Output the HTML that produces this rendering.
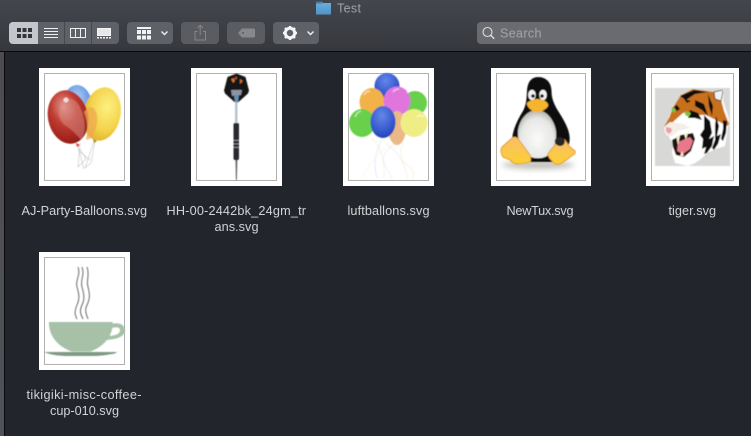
<!DOCTYPE html>
<html><head><meta charset="utf-8"><title>Test</title>
<style>
html,body{margin:0;padding:0;background:#22252c;width:751px;height:436px;overflow:hidden}
svg{display:block}
text{font-family:"Liberation Sans",sans-serif}
.l{font-size:12.700px;fill:#d2d3d6}
</style></head><body>
<svg width="751" height="436" viewBox="0 0 751 436" xmlns="http://www.w3.org/2000/svg">
<defs>
<linearGradient id="tb" x1="0" y1="0" x2="0" y2="1"><stop offset="0" stop-color="#44464e"/><stop offset="1" stop-color="#36383e"/></linearGradient>
<linearGradient id="fold" x1="0" y1="0" x2="0" y2="1"><stop offset="0" stop-color="#6db0de"/><stop offset="1" stop-color="#4f94c6"/></linearGradient>
<linearGradient id="side" x1="0" y1="0" x2="0" y2="1"><stop offset="0" stop-color="#4e4c4e"/><stop offset="1" stop-color="#50525a"/></linearGradient>
<radialGradient id="red" cx=".45" cy=".3" r=".8"><stop offset="0" stop-color="#e29a92"/><stop offset=".4" stop-color="#c03c32"/><stop offset="1" stop-color="#8a1410"/></radialGradient>
<radialGradient id="yel" cx=".6" cy=".35" r=".75"><stop offset="0" stop-color="#fdf080"/><stop offset=".6" stop-color="#f4d24a"/><stop offset="1" stop-color="#d8a826"/></radialGradient>
<radialGradient id="blu" cx=".5" cy=".3" r=".8"><stop offset="0" stop-color="#b8d4f6"/><stop offset=".55" stop-color="#5a90e2"/><stop offset="1" stop-color="#1e48a8"/></radialGradient>
<radialGradient id="bl2" cx=".45" cy=".3" r=".8"><stop offset="0" stop-color="#6387ea"/><stop offset=".7" stop-color="#2f52c8"/><stop offset="1" stop-color="#1f3a98"/></radialGradient>
<radialGradient id="bel" cx=".5" cy=".6" r=".62"><stop offset="0" stop-color="#fbfbfb"/><stop offset=".7" stop-color="#e6e6e4"/><stop offset="1" stop-color="#aaaaa6"/></radialGradient>
<linearGradient id="foot" x1="0" y1="0" x2="0" y2="1"><stop offset="0" stop-color="#f8bf6a"/><stop offset="1" stop-color="#fdcf34"/></linearGradient>
<filter id="b" x="-5%" y="-5%" width="110%" height="110%"><feGaussianBlur stdDeviation=".4"/></filter>
<filter id="sh" x="-30%" y="-60%" width="160%" height="220%"><feGaussianBlur stdDeviation="3"/></filter>
</defs>

<!-- toolbar -->
<rect width="751" height="51" fill="url(#tb)"/>
<rect y="51" width="751" height="1" fill="#08090b"/>
<rect x="0" y="52" width="4" height="384" fill="url(#side)"/>
<rect x="4" y="52" width="1" height="384" fill="#0a0b0d"/>

<!-- title -->
<path d="M316 3q0-1.500 1.500-1.500h4l1.500 1.500h8v11.500h-15z" fill="url(#fold)"/>
<path d="M316 1.500h5l1.500 2h-6.500z" fill="#3d78a6"/>
<text x="337" y="12.500" font-size="12.500" fill="#a0a2a6" textLength="24">Test</text>

<!-- view segmented -->
<rect x="9" y="22" width="110" height="22" rx="4" fill="#5f6168"/>
<path d="M13 22h25v22h-25a4 4 0 0 1-4-4v-14a4 4 0 0 1 4-4z" fill="#c3c6cb"/>
<rect x="64" y="22" width="1" height="22" fill="#46484e"/><rect x="91" y="22" width="1" height="22" fill="#46484e"/>
<g fill="#33353b"><rect x="17" y="28" width="4" height="4"/><rect x="22.500" y="28" width="4" height="4"/><rect x="28" y="28" width="4" height="4"/><rect x="17" y="34" width="4" height="4"/><rect x="22.500" y="34" width="4" height="4"/><rect x="28" y="34" width="4" height="4"/></g>
<g fill="#f0f0f1"><rect x="44" y="28" width="14" height="1"/><rect x="44" y="31" width="14" height="1"/><rect x="44" y="34" width="14" height="1"/><rect x="44" y="37" width="14" height="1"/></g>
<g fill="none" stroke="#f0f0f1"><rect x="70.500" y="28.500" width="15" height="9"/><path d="M75.500 28.500v9M80.500 28.500v9"/></g>
<rect x="97.500" y="28.500" width="13" height="7" fill="#e8e8ea" stroke="#f4f4f5"/>
<g fill="#f0f0f1"><rect x="97" y="37" width="2" height="1.500"/><rect x="100" y="37" width="2" height="1.500"/><rect x="103" y="37" width="2" height="1.500"/><rect x="106" y="37" width="2" height="1.500"/><rect x="109" y="37" width="2" height="1.500"/></g>

<!-- arrange -->
<rect x="127" y="22" width="46" height="22" rx="4" fill="#5f6168"/>
<g fill="#f2f2f3"><rect x="137" y="27" width="14" height="2"/><rect x="137" y="30" width="4" height="4"/><rect x="142" y="30" width="4" height="4"/><rect x="147" y="30" width="4" height="4"/><rect x="137" y="35.500" width="4" height="4"/><rect x="142" y="35.500" width="4" height="4"/><rect x="147" y="35.500" width="4" height="4"/></g>
<path d="M161.500 31.500l3 3 3-3" fill="none" stroke="#f0f0f1" stroke-width="1.400"/>

<!-- share -->
<rect x="181" y="22" width="38" height="22" rx="4" fill="#5a5c62"/>
<path d="M197.500 31.500h-2.500v8.500h10.500v-8.500h-2.500M200.200 35v-9M197.500 28l2.700-2.700 2.700 2.700" fill="none" stroke="#84868b" stroke-width="1"/>

<!-- tag -->
<rect x="227" y="22" width="38" height="22" rx="4" fill="#5a5c62"/>
<path d="M238 33l4-4.500h11.500a1.500 1.500 0 0 1 1.500 1.500v6a1.500 1.500 0 0 1-1.500 1.500h-11.500z" fill="#86888d"/>
<circle cx="243" cy="33" r="1" fill="#5a5c62"/>

<!-- action -->
<rect x="273" y="22" width="46" height="22" rx="4" fill="#5f6168"/>
<circle cx="290" cy="33" r="4.700" fill="none" stroke="#f5f5f6" stroke-width="3"/>
<g stroke="#f5f5f6" stroke-width="2.400"><path d="M290 26v2.500M290 37.500v2.500M283 33h2.500M294.500 33h2.500M285 28l1.800 1.800M293.200 36.200l1.800 1.800M295 28l-1.800 1.800M286.800 36.200l-1.800 1.800"/></g>
<path d="M307.500 31.500l3 3 3-3" fill="none" stroke="#f0f0f1" stroke-width="1.400"/>

<!-- search -->
<path d="M481 22h270v22h-270a4 4 0 0 1-4-4v-14a4 4 0 0 1 4-4z" fill="#696b70"/>
<circle cx="487.500" cy="32" r="4.500" fill="none" stroke="#dcdcde" stroke-width="1.100"/>
<path d="M490.800 35.300l3.400 3.500" stroke="#e8e8ea" stroke-width="1.300"/>
<text x="500" y="37.500" font-size="12.500" fill="#9b9da1" stroke="#9b9da1" stroke-width=".2" textLength="41.500">Search</text>

<!-- thumb frames -->
<g fill="#fff">
<rect x="39" y="68" width="91" height="118"/><rect x="191" y="68" width="91" height="118"/><rect x="343" y="68" width="91" height="118"/><rect x="491" y="68" width="100" height="118"/><rect x="646" y="68" width="93" height="118"/><rect x="39" y="252" width="91" height="118"/>
</g>
<g fill="none" stroke="#b0b0b0">
<rect x="44.500" y="73.500" width="80" height="107"/><rect x="196.500" y="73.500" width="80" height="107"/><rect x="348.500" y="73.500" width="80" height="107"/><rect x="496.500" y="73.500" width="89" height="107"/><rect x="651.500" y="73.500" width="82" height="107"/><rect x="44.500" y="257.500" width="80" height="107"/>
</g>

<!-- balloons 1 -->
<g filter="url(#b)">
<ellipse cx="77" cy="110" rx="16" ry="25" fill="url(#blu)"/>
<ellipse cx="102" cy="114" rx="18.500" ry="27" transform="rotate(12 102 114)" fill="url(#yel)"/>
<g fill="none" stroke="#c4c4c4" stroke-width=".6"><path d="M77 143l7 26M80 143l-2 24 8-8-6-10M94 141l-9 27M95 141l-4 22-6 5M78 150l12 10"/></g>
<ellipse cx="68" cy="117" rx="20" ry="27" transform="rotate(-12 68 117)" fill="url(#red)"/>
<path d="M62 100q14-6 20 12t-1 28q-8-10-15-14t-7-14z" fill="#d98f88" opacity=".5"/>
<path d="M84 112q8-10 12 0t-4 26l-6 2q3-16-2-28z" fill="#efa850" opacity=".75"/>
<path d="M76 143l4 2-3 2z" fill="#d33"/><path d="M93 139l4 2-3 2z" fill="#a58a20"/>
<circle cx="66" cy="100" r="2.500" fill="#f5dcd8"/>
</g>

<!-- dart -->
<g filter="url(#b)">
<path d="M236.500 73.500l9 3.500 3.500 13.500-1 3-9.500 8.500h-4l-9.500-8.500-1-3 3.500-13.500z" fill="#161518"/>
<path d="M231 79l3-1 1 3-2 2zM240 79l3 2-3 3zM236 76l1 3h-2z" fill="#d4702a"/>
<path d="M231 90l11 0-1 5-9 1z" fill="#8b94a3"/>
<path d="M234 95h5l-1 8h-3z" fill="#6a8cab"/>
<rect x="235" y="102" width="2.500" height="21" fill="#b3c3d0"/>
<rect x="233.500" y="123" width="5.500" height="37" rx="1.500" fill="#2c2c2f"/>
<g fill="#a0a0a2"><rect x="233.500" y="140" width="5.500" height=".8"/><rect x="233.500" y="143.500" width="5.500" height=".8"/><rect x="233.500" y="147" width="5.500" height=".8"/></g>
<path d="M235.500 160h1.800l-.4 20h-1z" fill="#5f5f5f"/>
</g>

<!-- luftballons -->
<g filter="url(#b)">
<g fill="none" stroke-width=".7" opacity=".6"><path d="M383 138q-12 20-6 40" stroke="#c4d4ec"/><path d="M397 143q-18 10-12 22t8 15" stroke="#d4dfee"/><path d="M403 143q-6 15 4 22t5 14" stroke="#f0e2c4"/><path d="M372 138q14 15 12 40" stroke="#eee2c0"/><path d="M386 144q16 8 22 36" stroke="#f0e0c6"/><path d="M362 180q8-24 34-38" stroke="#eeeee0"/></g>
<ellipse cx="387" cy="86" rx="12.500" ry="13" fill="url(#bl2)"/>
<circle cx="415" cy="103" r="12" fill="#67d04b"/>
<ellipse cx="372" cy="102" rx="12.500" ry="14" fill="#f2b14a"/>
<ellipse cx="362" cy="123" rx="13" ry="14" fill="#67d04b"/>
<ellipse cx="397" cy="101" rx="13.500" ry="14.500" fill="#df74dd"/>
<ellipse cx="397" cy="128" rx="9" ry="17" fill="#eab987"/>
<ellipse cx="414" cy="123" rx="13.500" ry="14" fill="#eeee85"/>
<ellipse cx="383" cy="122" rx="12.500" ry="16" fill="url(#bl2)"/>
<path d="M355 117q2-5 6-6M407 93q2-4 6-4M364 95q2-4 6-4M393 92q2-3 6-3M417 117q3-3 7 0" stroke="#fff" stroke-width="1.500" opacity=".55" fill="none"/>
</g>

<!-- tux -->
<g filter="url(#b)">
<ellipse cx="538" cy="165" rx="36" ry="4" fill="#8a8a80" opacity=".55" filter="url(#sh)"/>
<path d="M538.500 77c-8 0-11 6-11.500 14-.5 8-.5 13-4 20-5 8-9 16-10.500 25-1 7 1 12 6 16l8 10h26l9-10c6-3 9-8 8-16-1-9-7-18-12-26-4-7-6-12-6-19 0-8-5-14-13.500-14z" fill="#0c0c0d"/>
<path d="M537 110c-9 0-17 8-19 20-1 10 3 20 11 26 5 3 13 3 18 0 7-5 10-15 9-25-2-12-10-21-19-21z" fill="url(#bel)"/>
<ellipse cx="532" cy="95" rx="3.800" ry="5.300" fill="#f2f2f0"/><ellipse cx="543" cy="95" rx="3.800" ry="5.300" fill="#f2f2f0"/>
<circle cx="533" cy="96" r="1.800" fill="#111"/><circle cx="542" cy="96" r="1.800" fill="#111"/>
<path d="M528 102c3-2 6-3 9-3 3 0 9 1 11 5 1 2-1 4-4 6-3 2-6 3-9 2-3-1-6-3-8-7-.5-1.500 0-2.500 1-3z" fill="#f5b32e"/>
<path d="M502 147l10-9c3-2 5-1 7 2l11 15c1 2 1 6 0 7-4 1-9 2-13 2-3 0-5-2-7-4l-7-3c-2-3-3-7-1-10z" fill="url(#foot)" stroke="#e29a2a" stroke-width=".9"/>
<path d="M557 142c2-3 6-3 8-2l4 6 6 5c1 2 0 3-2 4l-11 8c-3 2-7 2-9-1-3-3-5-5-5-8 2-4 6-7 9-12z" fill="url(#foot)" stroke="#e29a2a" stroke-width=".9"/>
<path d="M555 140c1-3 7-4 9-1 2 3 0 7-4 7-3 0-6-3-5-6z" fill="#26262a"/>
</g>

<!-- tiger -->
<g filter="url(#b)">
<rect x="655" y="88" width="75" height="78" fill="#d8d8d6"/>
<path d="M667 128l2-12 4-10 9-12 12-5 20 3 8-3 2 2-1 9 6 19-2 15-2 12-9 3-9 4-6 6-6 4-7 3-13-3-3-10 1-9-4-7z" fill="#fff"/>
<path d="M664 127l5-9 4-11 8-12 12-6 21 3 6 4 4 15 5 13-2 2-13-7-8-4-8 0-7-3-8 1-9 8-6 6z" fill="#c86f1c"/>
<path d="M680 96l14-6 14 2-13 2-9 6zM695 100l9 4 4 12-6-6-7-4zM684 99l7 2-4 2zM708 94l5 12-1 10-3-10zM672 108l5-3 3 4-3 2zM690 110l8 3 4 7-7-2-7 0z" fill="#111"/>
<path d="M704 115l6 6 2 12-3 6 5-3-2 10-5 7-3 1 2-7-4 2 1-10-3-4 4-6z" fill="#0f0f10"/>
<path d="M716 116l3 10-2 10 4-2-3 10-4 6-2-2 3-8 0-14z" fill="#0f0f10"/>
<path d="M723 120l4 1-1 12-3 8-2-2 2-10z" fill="#111"/>
<path d="M685 111l6 2-2 4-4-2z" fill="#7cc23c"/><path d="M671 110l3-3 2 3-2 3z" fill="#7cc23c"/>
<path d="M664 127l6-5 14 2 6 4-12 3-6 5-5 0-3-5z" fill="#f4eee6"/>
<path d="M666 127l5 1 1 3-3 3-3-3z" fill="#e8a0a4"/>
<path d="M672 140l9-5 12-2 2 6-4 12-7 6-8-2-3-8z" fill="#1d1510"/>
<path d="M678 142l12-5 3 4-3 8-7 5-6-3z" fill="#e8788a"/>
<path d="M676 136l2 9 2-9zM684 134l2 6 2-7zM680 156l2-5 2 5z" fill="#f5efc8"/>
<path d="M714 92l8-2 1 2-2 9-6-2z" fill="#f2f2f2" stroke="#111" stroke-width=".7"/>
</g>

<!-- coffee -->
<g filter="url(#b)">
<g fill="none" stroke="#5c5c5a" stroke-width=".9"><path d="M78 267c3 8-3 13-1 20s3 11 0 18-2 10 0 14"/><path d="M82 267c3 8-2 13 0 20s3 12 0 18-1 10 1 14"/><path d="M87 267c3 8-1 13 1 20s2 12-1 18 0 11 1 14"/></g>
<path d="M49 322h63.500c1 12-7 24-22 29.500h-19c-15-5.500-23-17-22.500-29.500z" fill="#a6c1a8"/>
<path d="M111 324c6-1.500 13-1 14 6 .5 6-7 9-18 10l2-4c7-.5 11-2 11-6 0-3-4-3-8-2z" fill="#a6c1a8"/>
<path d="M44 352h73l-2 1.500c-8 1.500-15 2.500-24 2.500h-22c-10 0-18-1-25-4z" fill="#7f9a85"/>
</g>

<!-- labels -->
<text class="l" x="21.500" y="215" textLength="125.500">AJ-Party-Balloons.svg</text>
<text class="l" x="166.500" y="215" textLength="139.500">HH-00-2442bk_24gm_tr</text>
<text class="l" x="214.500" y="231" textLength="44">ans.svg</text>
<text class="l" x="347.500" y="215" textLength="82">luftballons.svg</text>
<text class="l" x="506.500" y="215" textLength="67">NewTux.svg</text>
<text class="l" x="668.500" y="215" textLength="47.500">tiger.svg</text>
<text class="l" x="26.500" y="399" textLength="115">tikigiki-misc-coffee-</text>
<text class="l" x="50" y="415" textLength="69">cup-010.svg</text>
</svg>
</body></html>
